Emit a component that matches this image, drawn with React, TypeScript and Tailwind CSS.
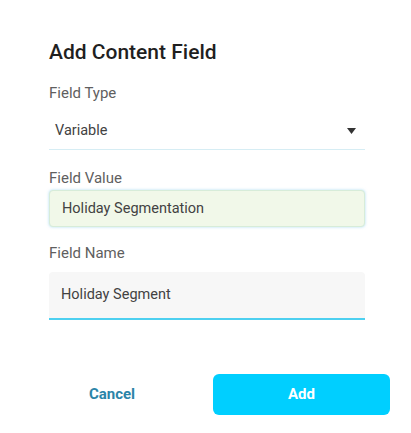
export default function App() {
  return (
    <div className="h-[433px] w-[411px] bg-white font-['Roboto',sans-serif]">
      <div className="pl-[49px] pt-[39px]">
        <h1 className="text-[21px] font-medium leading-[26px] text-[#1f1f1f]">Add Content Field</h1>

        <div className="mr-[46px]">
          <label className="mt-[18px] block text-[15px] leading-[20px] text-[#5f5f5f]">Field Type</label>
          <div className="flex h-[47px] items-start border-b border-[#d6edf4] pl-[6px] pr-[9px] pt-[19px]">
            <span className="flex-1 text-[14.5px] leading-[18px] text-[#424242]">Variable</span>
            <svg width="9" height="6" viewBox="0 0 9 6" className="mt-[6px]">
              <path d="M0 0 H9 L4.5 6 Z" fill="#333" />
            </svg>
          </div>

          <label className="mt-[18px] block text-[15px] leading-[20px] text-[#5f5f5f]">Field Value</label>
          <div className="mt-[2px] flex h-[37px] items-center rounded-[4px] border border-[#d7ecd9] bg-[#f1f8e9] pl-[12px] shadow-[0_0_3px_rgba(120,200,230,0.6)]">
            <span className="text-[14.5px] text-[#424242]">Holiday Segmentation</span>
          </div>

          <label className="mt-[16px] block text-[15px] leading-[20px] text-[#5f5f5f]">Field Name</label>
          <div className="mt-[9px] flex h-[48px] items-center rounded-t-[4px] border-b-2 border-[#4dd0f0] bg-[#f7f7f7] pl-[12px]">
            <span className="text-[14.5px] text-[#424242]">Holiday Segment</span>
          </div>
        </div>

        <div className="mr-[21px] mt-[54px] flex items-center gap-[38px]">
          <button className="flex h-[41px] w-[126px] items-center justify-center text-[15px] font-bold text-[#2b84a8]">
            Cancel
          </button>
          <button className="flex h-[41px] flex-1 items-center justify-center rounded-[6px] bg-[#00cfff] text-[15px] font-bold text-white">
            Add
          </button>
        </div>
      </div>
    </div>
  )
}
